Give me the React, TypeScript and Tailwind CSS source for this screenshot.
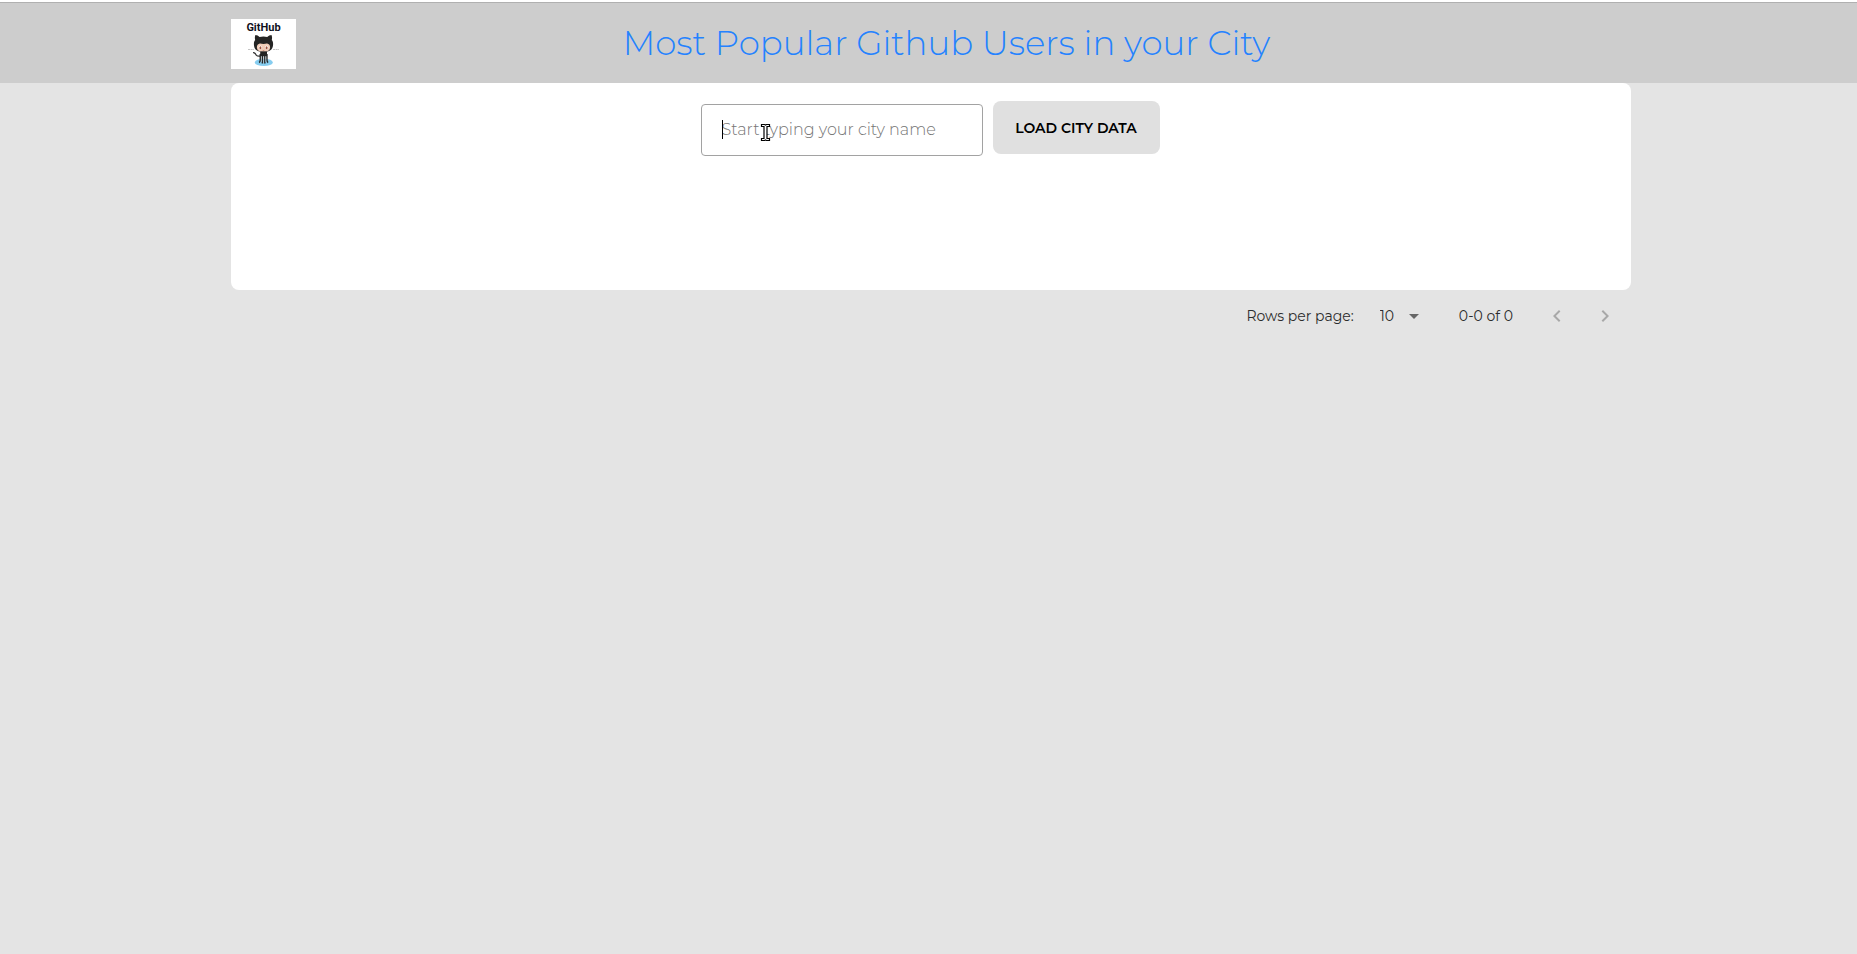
import { useState } from 'react';

function Logo() {
  return (
    <a href="#" aria-label="GitHub home" className="block h-[50px] w-[65px] shrink-0 bg-white">
      <svg viewBox="0 0 65 50" className="h-full w-full">
        <text
          x="32.5"
          y="12"
          textAnchor="middle"
          className="fill-[#10101c] font-[Roboto,sans-serif] text-[11px] font-bold"
        >
          GitHub
        </text>
        <path d="M17 30.5h6M42 30.5h6" stroke="#c4c4c4" strokeWidth="1" strokeDasharray="2 0.6" />
        <ellipse cx="32.8" cy="43.4" rx="9" ry="3.6" fill="#86cdf0" />
        <path d="M22.6 33.6c1.8.2 2 1.6 2.8 2.7.9 1 2 1 3.6.9" fill="none" stroke="#262626" strokeWidth="1.2" strokeLinecap="round" />
        <path
          d="M24.4 16c1.6 0 3 .8 4.2 2a15 15 0 0 1 7.6 0c1.3-1.2 2.7-2 4.3-2 .7 1.7.7 3.4.3 4.9 1.2 1.4 1.5 3.2 1.2 5.6-.5 4.3-3.4 6.3-9.5 6.3s-9.1-2-9.5-6.3c-.3-2.4 0-4.2 1.2-5.6-.5-1.5-.5-3.2.2-4.9z"
          fill="#242424"
        />
        <path
          d="M28.3 24.7c1.5-.3 2.7.3 4.2.3s2.7-.6 4.2-.3c1.7.4 2.5 1.9 2.4 3.7-.2 3.2-2.5 4.2-6.6 4.2s-6.4-1-6.6-4.2c-.1-1.8.7-3.3 2.4-3.7z"
          fill="#f2cdb8"
        />
        <ellipse cx="29.3" cy="28.5" rx="1.6" ry="2.1" fill="#fff" />
        <ellipse cx="35.7" cy="28.5" rx="1.6" ry="2.1" fill="#fff" />
        <ellipse cx="29.4" cy="28.7" rx="1" ry="1.5" fill="#a0523f" />
        <ellipse cx="35.6" cy="28.7" rx="1" ry="1.5" fill="#a0523f" />
        <path d="M31.7 31.3q.8.5 1.6 0" fill="none" stroke="#a0523f" strokeWidth=".5" />
        <path d="M29.2 32.5h6.8v5h-6.8z" fill="#242424" />
        <path
          d="M29.3 35v6q0 2-1.3 2.5M31.4 35v9.5M33.8 35v9.5M35.9 35v6q0 2 1.3 2.5"
          fill="none"
          stroke="#242424"
          strokeWidth="1.5"
        />
        <path d="M30.35 37v6M32.6 37v7M34.85 37v6" stroke="#b4c4cc" strokeWidth=".7" />
      </svg>
    </a>
  );
}

function Header() {
  return (
    <header className="border-t border-[#b0b0b0] bg-[#cdcdcd] pl-[5px]">
      <div className="mx-auto flex h-20 max-w-[1400px] items-center pt-px">
        <Logo />
        <h1 className="flex-1 pr-[34px] pb-0.5 text-center text-[34px] leading-10 font-light text-[#2482ff]">
          Most Popular Github Users in your City
        </h1>
      </div>
    </header>
  );
}

function SearchPanel() {
  const [city, setCity] = useState('');
  return (
    <form
      onSubmit={(e) => e.preventDefault()}
      className="flex min-h-[207px] items-start justify-center gap-[10px] rounded-lg bg-white pt-[18px] pr-[2px]"
    >
      <div className="relative mt-[3px]">
        <input
          type="text"
          aria-label="City name"
          value={city}
          onChange={(e) => setCity(e.target.value)}
          placeholder="Start typing your city name"
          className="block h-[52px] w-[282px] rounded border border-[#a2a2a2] bg-white px-5 pb-0.5 text-base font-light text-black outline-none placeholder:text-[#757575]"
        />
        <span className="pointer-events-none absolute top-4 left-[21px] h-[19px] w-px bg-black" />
        <svg viewBox="0 0 9 17" className="pointer-events-none absolute top-5 left-[60px] h-[17px] w-[9px] overflow-visible">
          <path d="M.5.5h3l1 .5 1-.5h3v2H6v12h2.500v2h-3l-1-.5-1 .5h-3v-2H3v-12H.5z" fill="#fff" stroke="#000" strokeWidth="1.2" />
        </svg>
      </div>
      <button
        type="submit"
        className="h-[53px] w-[167px] rounded-lg bg-[#e0e0e0] text-sm font-semibold text-black"
      >
        LOAD CITY DATA
      </button>
    </form>
  );
}

function Pagination() {
  return (
    <nav aria-label="Pagination" className="flex h-[52px] items-center justify-end pr-[2px] text-sm text-[#2c2c2c]">
      <label htmlFor="rows">Rows per page:</label>
      <div className="relative ml-[26px]">
        <select id="rows" defaultValue="10" className="block h-6 w-[46px] appearance-none bg-transparent outline-none">
          <option>10</option>
          <option>25</option>
          <option>50</option>
        </select>
        <svg viewBox="0 0 24 24" className="pointer-events-none absolute top-0 right-0 size-6 fill-[#666]">
          <path d="M7 10l5 5 5-5z" />
        </svg>
      </div>
      <span className="mr-5 ml-[33px]">0-0 of 0</span>
      <button type="button" aria-label="Previous page" disabled className="p-3">
        <svg viewBox="0 0 24 24" className="size-6 fill-[#a8a8a8]">
          <path d="M15.41 16.59L10.83 12l4.58-4.59L14 6l-6 6 6 6z" />
        </svg>
      </button>
      <button type="button" aria-label="Next page" disabled className="p-3">
        <svg viewBox="0 0 24 24" className="size-6 fill-[#a8a8a8]">
          <path d="M8.59 16.59L13.17 12 8.59 7.41 10 6l6 6-6 6z" />
        </svg>
      </button>
    </nav>
  );
}

export default function App() {
  return (
    <div className="min-h-screen border-t-2 border-white bg-[#e4e4e4] font-[Montserrat,Inter,sans-serif]">
      <Header />
      <div className="pl-[5px]">
        <main className="mx-auto max-w-[1400px]">
          <SearchPanel />
          <Pagination />
        </main>
      </div>
    </div>
  );
}
